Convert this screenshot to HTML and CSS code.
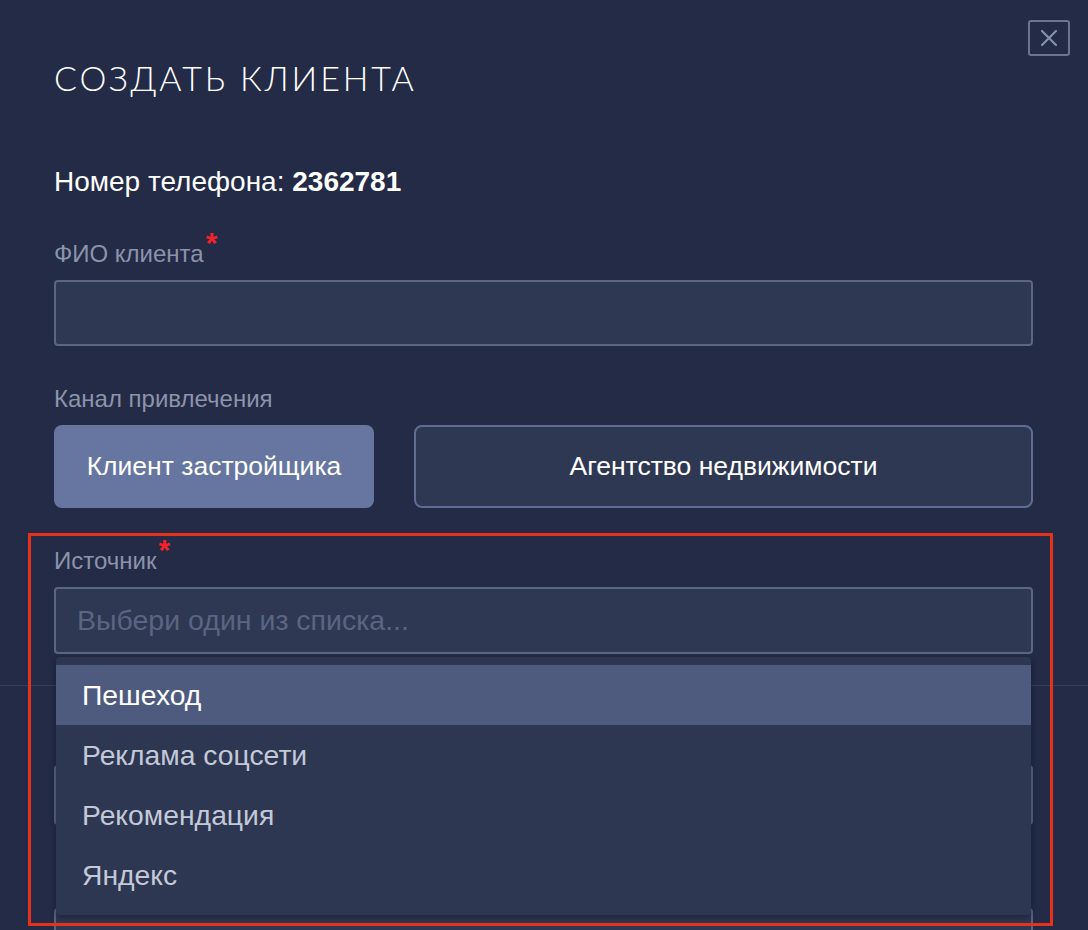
FILE: index.html
```html
<!DOCTYPE html>
<html lang="ru">
<head>
<meta charset="utf-8">
<title>Создать клиента</title>
<link rel="stylesheet" href="styles.css">
</head>
<body>
<div class="modal">
  <button class="close" aria-label="Закрыть">
    <svg width="18" height="18" viewBox="0 0 18 18"><path d="M2 2 L16 16 M16 2 L2 16" stroke="#8790ab" stroke-width="2.2" stroke-linecap="round" fill="none"/></svg>
  </button>
  <div class="body">
    <h1 class="title">СОЗДАТЬ КЛИЕНТА</h1>
    <p class="phone">Номер телефона: <b>2362781</b></p>

    <div class="field">
      <label class="label">ФИО клиента<span class="req">*</span></label>
      <div class="input"></div>
    </div>

    <div class="field">
      <label class="label">Канал привлечения</label>
      <div class="channels">
        <button class="chan active">Клиент застройщика</button>
        <button class="chan">Агентство недвижимости</button>
      </div>
    </div>

    <div class="field">
      <label class="label">Источник<span class="req">*</span></label>
      <div class="select-wrap">
        <div class="input select"><span class="placeholder">Выбери один из списка...</span></div>
        <ul class="dropdown">
          <li class="opt hover">Пешеход</li>
          <li class="opt">Реклама соцсети</li>
          <li class="opt">Рекомендация</li>
          <li class="opt">Яндекс</li>
        </ul>
      </div>
    </div>
  </div>
  <div class="footer">
    <div class="input short"></div>
    <div class="spacer"></div>
    <div class="input"></div>
  </div>
  <div class="annot"></div>
</div>
</body>
</html>
```

FILE: styles.css
```css
* { box-sizing: border-box; }
html, body { margin: 0; padding: 0; }
body {
  background: #232b46;
  font-family: "Liberation Sans", Arial, sans-serif;
  color: #ffffff;
  width: 1088px;
  height: 930px;
  overflow: hidden;
}
.modal {
  position: relative;
  width: 1088px;
  min-height: 930px;
}
.close {
  position: absolute;
  top: 20px;
  left: 1028px;
  width: 42px;
  height: 36px;
  border: 2px solid #6a7493;
  border-radius: 3px;
  background: transparent;
  padding: 0;
  display: flex;
  align-items: center;
  justify-content: center;
}
.body {
  padding: 58px 55px 31px 54px;
  border-bottom: 1px solid #353e5a;
}
.title {
  margin: 0;
  font-family: "Lato", "Liberation Sans", sans-serif;
  font-weight: 300;
  font-size: 34px;
  line-height: 40px;
  letter-spacing: 2.9px;
  color: #ffffff;
}
.phone {
  margin: 69px 0 0;
  font-size: 28px;
  line-height: 30px;
  color: #ffffff;
}
.phone b { font-weight: 700; }
.field { margin-top: 44px; }
.field + .field { margin-top: 40px; }
.label {
  display: block;
  font-size: 24px;
  line-height: 25px;
  color: #8c94ab;
  margin-bottom: 14px;
}
.req {
  color: #f2232a;
  font-size: 30px;
  font-weight: 700;
  line-height: 0;
  position: relative;
  top: -9px;
  margin-left: 2px;
}
.input {
  height: 66px;
  border: 2px solid #5b6685;
  border-radius: 4px;
  background: #2f3852;
}
.channels {
  display: flex;
  gap: 40px;
}
.chan {
  height: 83px;
  border-radius: 8px;
  font-family: "Liberation Sans", Arial, sans-serif;
  font-size: 26.5px;
  color: #ffffff;
  padding: 0;
}
.chan.active {
  width: 320px;
  background: #6676a0;
  border: none;
}
.chan:not(.active) {
  flex: 1;
  background: #2f3852;
  border: 2px solid #5f6d95;
}
.select-wrap { position: relative; }
.select {
  height: 67px;
  display: flex;
  align-items: center;
  padding-left: 21px;
}
.placeholder {
  font-size: 28.5px;
  color: #5a6583;
}
.dropdown {
  position: absolute;
  top: calc(100% + 3px);
  left: 2px;
  right: 2px;
  margin: 0;
  padding: 8px 0 10px;
  list-style: none;
  background: #2e3751;
  border-radius: 4px;
  box-shadow: 0 3px 6px rgba(10, 14, 28, 0.45);
  z-index: 5;
}
.opt {
  height: 60px;
  line-height: 60px;
  padding-left: 26px;
  font-size: 28.3px;
  color: #c3c9d9;
}
.opt.hover {
  background: #4f5b7e;
  color: #ffffff;
}
.footer {
  padding: 79px 55px 0 54px;
}
.input.short { height: 60px; }
.spacer { height: 83px; }
.annot {
  position: absolute;
  left: 28px;
  top: 533px;
  width: 1025px;
  height: 393px;
  border: 3px solid #e6321b;
  z-index: 10;
  pointer-events: none;
}
```
